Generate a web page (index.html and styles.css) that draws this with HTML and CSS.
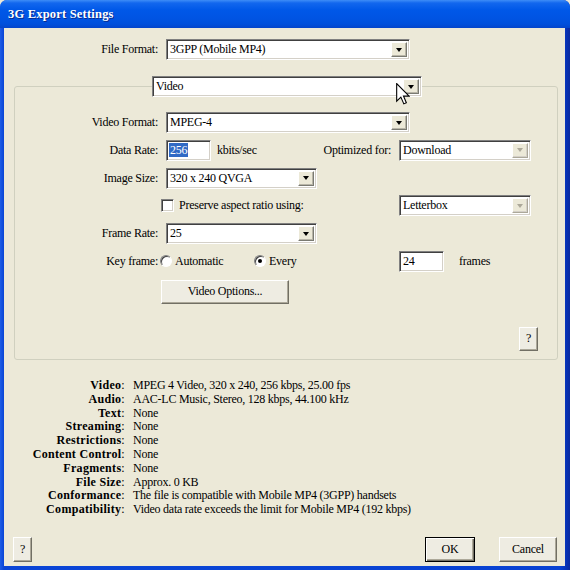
FILE: index.html
```html
<!DOCTYPE html>
<html>
<head>
<meta charset="utf-8">
<link rel="stylesheet" href="styles.css">
</head>
<body>
<div class="window">
  <div class="titlebar"><span class="title">3G Export Settings</span></div>
  <div class="frame">
    <div class="format-row">
      <span class="lbl-top">File Format:</span>
      <div class="select w244"><span class="val">3GPP (Mobile MP4)</span><span class="arrow"></span></div>
    </div>
    <div class="tab-row">
      <div class="select w270"><span class="val">Video</span><span class="arrow"></span></div>
    </div>
    <div class="group">
      <div class="grid">
        <span class="lbl">Video Format:</span>
        <div class="select w244 span2"><span class="val">MPEG-4</span><span class="arrow"></span></div>

        <span class="lbl">Data Rate:</span>
        <div class="mid">
          <div class="textbox"><span class="sel">256</span></div>
          <span class="unit">kbits/sec</span>
          <span class="opt">Optimized for:</span>
        </div>
        <div class="select disabled"><span class="val">Download</span><span class="arrow"></span></div>

        <span class="lbl">Image Size:</span>
        <div class="select w151 span2"><span class="val">320 x 240 QVGA</span><span class="arrow"></span></div>

        <span class="lbl"></span>
        <div class="check-item"><span class="checkbox"></span><span>Preserve aspect ratio using:</span></div>
        <div class="select disabled"><span class="val">Letterbox</span><span class="arrow"></span></div>

        <span class="lbl">Frame Rate:</span>
        <div class="select w151 span2"><span class="val">25</span><span class="arrow"></span></div>

        <span class="lbl">Key frame:</span>
        <div class="radios">
          <div class="rad-item first"><span class="radio"></span><span>Automatic</span></div>
          <div class="rad-item"><span class="radio on"></span><span>Every</span></div>
        </div>
        <div class="frames"><div class="textbox small"><span>24</span></div><span class="unit2">frames</span></div>
      </div>
      <button class="btn vopt">Video Options...</button>
      <div class="help-row"><button class="btn q">?</button></div>
    </div>
    <div class="info">
      <b>Video</b><span>MPEG 4 Video, 320 x 240, 256 kbps, 25.00 fps</span>
      <b>Audio</b><span>AAC-LC Music, Stereo, 128 kbps, 44.100 kHz</span>
      <b>Text</b><span>None</span>
      <b>Streaming</b><span>None</span>
      <b>Restrictions</b><span>None</span>
      <b>Content Control</b><span>None</span>
      <b>Fragments</b><span>None</span>
      <b>File Size</b><span>Approx. 0 KB</span>
      <b>Conformance</b><span>The file is compatible with Mobile MP4 (3GPP) handsets</span>
      <b>Compatibility</b><span>Video data rate exceeds the limit for Mobile MP4 (192 kbps)</span>
    </div>
    <div class="footer">
      <button class="btn q">?</button>
      <button class="btn ok">OK</button>
      <button class="btn cancel">Cancel</button>
    </div>
  </div>
  <svg class="cursor" width="14" height="22" viewBox="0 0 12.5 20">
    <path d="M0.5 0.5 L0.5 16.5 L4.3 12.8 L7 19 L9.3 18 L6.7 11.9 L11.8 11.9 Z" fill="#fff" stroke="#000" stroke-width="1" stroke-linejoin="miter"/>
  </svg>
</div>
</body>
</html>
```

FILE: styles.css
```css
* { box-sizing: border-box; }
html, body { margin: 0; padding: 0; }
body {
  width: 570px;
  height: 570px;
  overflow: hidden;
  font-family: "Liberation Serif", "Times New Roman", serif;
  font-size: 12px;
  letter-spacing: -0.25px;
  color: #000;
  background: #ECE9D8;
}
.window {
  width: 570px;
  height: 570px;
  display: flex;
  flex-direction: column;
  position: relative;
  background: linear-gradient(to right, #1E5DE6 0, #0A45D6 4px, #0842D2 560px, #0633B8 566px, #0A2A9E 570px);
  border-radius: 7px 7px 0 0;
  overflow: hidden;
}
.titlebar {
  height: 28px;
  flex: none;
  display: flex;
  align-items: center;
  padding-left: 8px;
  background: linear-gradient(to bottom, #3E8DF7 0, #1267EE 3px, #0058E8 10px, #0054E3 18px, #0050DC 24px, #0445CB 28px);
}
.title {
  color: #fff;
  font-weight: bold;
  font-size: 12.5px;
  letter-spacing: 0.2px;
  text-shadow: 1px 1px 0 #0A2B8C;
}
.frame {
  flex: 1;
  margin: 0 5px 4px 4px;
  background: #ECE9D8;
  display: flex;
  flex-direction: column;
}
.format-row {
  margin-top: 11px;
  display: flex;
  align-items: center;
  height: 21px;
}
.lbl-top { width: 154px; text-align: right; margin-right: 8px; }

.select {
  height: 21px;
  display: flex;
  align-items: stretch;
  background: #fff;
  border: 1px solid;
  border-color: #808080 #fff #fff #808080;
  box-shadow: inset 1px 1px 0 #404040, inset -1px -1px 0 #D4D0C8;
  padding: 2px;
}
.select .val {
  flex: 1;
  padding-left: 1px;
  line-height: 15px;
  white-space: nowrap;
  overflow: hidden;
}
.select .arrow {
  width: 16px;
  flex: none;
  background: #ECE9D8;
  border: 1px solid;
  border-color: #fff #7A7A72 #7A7A72 #fff;
  box-shadow: inset -1px -1px 0 #B8B5A8;
  display: flex;
  align-items: center;
  justify-content: center;
}
.select .arrow::before {
  content: "";
  border-left: 3.5px solid transparent;
  border-right: 3.5px solid transparent;
  border-top: 4px solid #000;
}
.select.disabled .arrow::before { border-top-color: #ACA899; }
.select.disabled .arrow { border-color: #fff #ACA899 #ACA899 #fff; box-shadow: inset -1px -1px 0 #D4D0C8; }
.w244 { width: 244px; }
.w270 { width: 270px; }
.w151 { width: 151px; }
.span2 { grid-column: 2 / span 2; justify-self: start; }

.tab-row {
  margin-top: 16px;
  padding-left: 148px;
  position: relative;
  z-index: 1;
}
.group {
  margin: -11px 7px 0 10px;
  border: 1px solid #D0D0BF;
  border-radius: 3px;
  padding: 25px 0 8px 0;
  display: flex;
  flex-direction: column;
}
.grid {
  display: grid;
  grid-template-columns: 143px 225px 132px;
  column-gap: 8px;
  row-gap: 6.8px;
  grid-auto-rows: 21px;
  align-items: center;
}
.lbl { text-align: right; }
.mid { display: flex; align-items: center; height: 21px; }
.textbox {
  width: 45px;
  height: 21px;
  background: #fff;
  border: 1px solid;
  border-color: #808080 #fff #fff #808080;
  box-shadow: inset 1px 1px 0 #404040, inset -1px -1px 0 #D4D0C8;
  padding: 2px 2px;
  line-height: 15px;
}
.textbox .sel { background: #316AC5; color: #fff; padding: 0 1px; }
.textbox.small { padding-left: 3px; }
.unit { margin-left: 6px; }
.opt { margin-left: auto; }
.check-item { display: flex; align-items: center; margin-left: -5px; gap: 5px; }
.checkbox {
  width: 13px;
  height: 13px;
  background: #fff;
  border: 1px solid;
  border-color: #808080 #fff #fff #808080;
  box-shadow: inset 1px 1px 0 #404040, inset -1px -1px 0 #D4D0C8;
}
.radios { display: flex; align-items: center; margin-left: -6px; }
.rad-item { display: flex; align-items: center; gap: 3px; }
.rad-item.first { width: 94px; }
.radio {
  width: 12px;
  height: 12px;
  border-radius: 50%;
  background: #fff;
  border: 1px solid;
  border-color: #808080 #fff #fff #808080;
  box-shadow: inset 1px 1px 0 #404040;
  display: flex;
  align-items: center;
  justify-content: center;
}
.radio.on::before {
  content: "";
  width: 4px;
  height: 4px;
  border-radius: 50%;
  background: #000;
}
.frames { display: flex; align-items: center; }
.unit2 { margin-left: 15px; }

.btn {
  font: inherit;
  letter-spacing: inherit;
  color: #000;
  background: #EEECE2;
  border: 1px solid;
  border-color: #fff #716F64 #716F64 #fff;
  box-shadow: inset -1px -1px 0 #ACA899;
  padding: 0;
  height: 24px;
}
.vopt { width: 128px; margin: 8px 0 0 146px; align-self: flex-start; }
.help-row { display: flex; justify-content: flex-end; margin-top: 23px; padding-right: 19px; }
.q { width: 19px; }

.info {
  margin-top: 19px;
  display: grid;
  grid-template-columns: 121px auto;
  column-gap: 8px;
  line-height: 13.8px;
}
.info b { text-align: right; font-weight: bold; letter-spacing: 0.3px; }
.info b::after { content: ":"; font-weight: normal; }

.footer {
  margin-top: auto;
  display: flex;
  align-items: flex-end;
  padding: 0 8px 4px 9px;
}
.footer .btn { height: 25px; }
.footer .ok {
  margin-left: auto;
  width: 50px;
  border: 1px solid #000;
  box-shadow: inset 1px 1px 0 #fff, inset -1px -1px 0 #716F64, inset -2px -2px 0 #ACA899;
}
.footer .cancel { width: 58px; margin-left: 24px; }

.cursor { position: absolute; left: 396px; top: 83px; z-index: 5; }
```
